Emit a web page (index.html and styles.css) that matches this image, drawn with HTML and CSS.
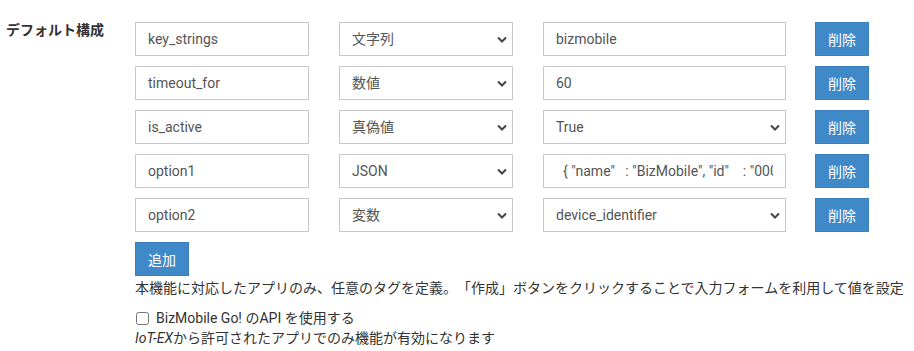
FILE: index.html
```html
<!DOCTYPE html>
<html lang="ja">
<head>
  <meta charset="UTF-8">
  <meta name="viewport" content="width=device-width, initial-scale=1.0">
  <title>デフォルト構成</title>
  <link rel="stylesheet" href="styles.css">
</head>
<body>
  <div class="form-group">
    <label class="group-label">デフォルト構成</label>
    <div class="group-body">
      <div class="config-row">
        <input type="text" class="field key" value="key_strings">
        <select class="field type"><option>文字列</option></select>
        <input type="text" class="field value" value="bizmobile">
        <button type="button" class="btn">削除</button>
      </div>
      <div class="config-row">
        <input type="text" class="field key" value="timeout_for">
        <select class="field type"><option>数値</option></select>
        <input type="text" class="field value" value="60">
        <button type="button" class="btn">削除</button>
      </div>
      <div class="config-row">
        <input type="text" class="field key" value="is_active">
        <select class="field type"><option>真偽値</option></select>
        <select class="field value"><option>True</option></select>
        <button type="button" class="btn">削除</button>
      </div>
      <div class="config-row">
        <input type="text" class="field key" value="option1">
        <select class="field type"><option>JSON</option></select>
        <input type="text" class="field value" value='  { "name"   : "BizMobile", "id"    : "0001" }'>
        <button type="button" class="btn">削除</button>
      </div>
      <div class="config-row">
        <input type="text" class="field key" value="option2">
        <select class="field type"><option>変数</option></select>
        <select class="field value"><option>device_identifier</option></select>
        <button type="button" class="btn">削除</button>
      </div>

      <button type="button" class="btn add">追加</button>
      <p class="help">本機能に対応したアプリのみ、任意のタグを定義。「作成」ボタンをクリックすることで入力フォームを利用して値を設定</p>

      <label class="check"><input type="checkbox"> BizMobile Go! のAPI を使用する</label>
      <p class="note"><em>IoT-EX</em>から許可されたアプリでのみ機能が有効になります</p>
    </div>
  </div>
</body>
</html>
```

FILE: styles.css
```css
body {
  margin: 0;
  font-family: Roboto, "Noto Sans CJK JP", sans-serif;
  font-size: 14px;
  line-height: 20px;
  color: #333;
  background-color: #fff;
  text-spacing-trim: space-all;
}
.form-group {
  display: flex;
  padding-top: 20px;
}
.group-label {
  width: 129px;
  padding-left: 6px;
  font-weight: bold;
  flex-shrink: 0;
}
.group-body {
  padding-top: 2px;
  white-space: nowrap;
}
.config-row {
  display: flex;
  align-items: center;
  margin-bottom: 10px;
}
.field {
  box-sizing: border-box;
  height: 34px;
  padding: 0 12px;
  border: 1px solid #c8c8c8;
  border-radius: 0;
  font-family: Roboto, "Noto Sans CJK JP", sans-serif;
  font-size: 14px;
  color: #555;
  background-color: #fff;
  outline: none;
}
select.field {
  -webkit-appearance: none;
  appearance: none;
  padding-right: 28px;
  background-image: url("data:image/svg+xml,%3Csvg xmlns='http://www.w3.org/2000/svg' width='10' height='7' viewBox='0 0 10 7'%3E%3Cpath d='M1 1.5l4 4 4-4' fill='none' stroke='%23444' stroke-width='2'/%3E%3C/svg%3E");
  background-repeat: no-repeat;
  background-position: right 5px center;
}
.key {
  width: 174px;
}
.type {
  width: 174px;
  margin-left: 30px;
}
.value {
  width: 243px;
  margin-left: 30px;
}
.btn {
  box-sizing: border-box;
  height: 34px;
  width: 54px;
  margin-left: 29px;
  padding: 0;
  border: 1px solid #3a80c0;
  border-radius: 0;
  background-color: #3f89c9;
  color: #fff;
  font-family: Roboto, "Noto Sans CJK JP", sans-serif;
  font-size: 14px;
}
.btn.add {
  display: block;
  margin: 0;
}
.help {
  margin: 2px 0 10px;
}
.check {
  display: flex;
  align-items: center;
  height: 20px;
}
.check input {
  width: 13px;
  height: 13px;
  margin: 0 7px 0 1px;
}
.note {
  margin: 0;
}
```
